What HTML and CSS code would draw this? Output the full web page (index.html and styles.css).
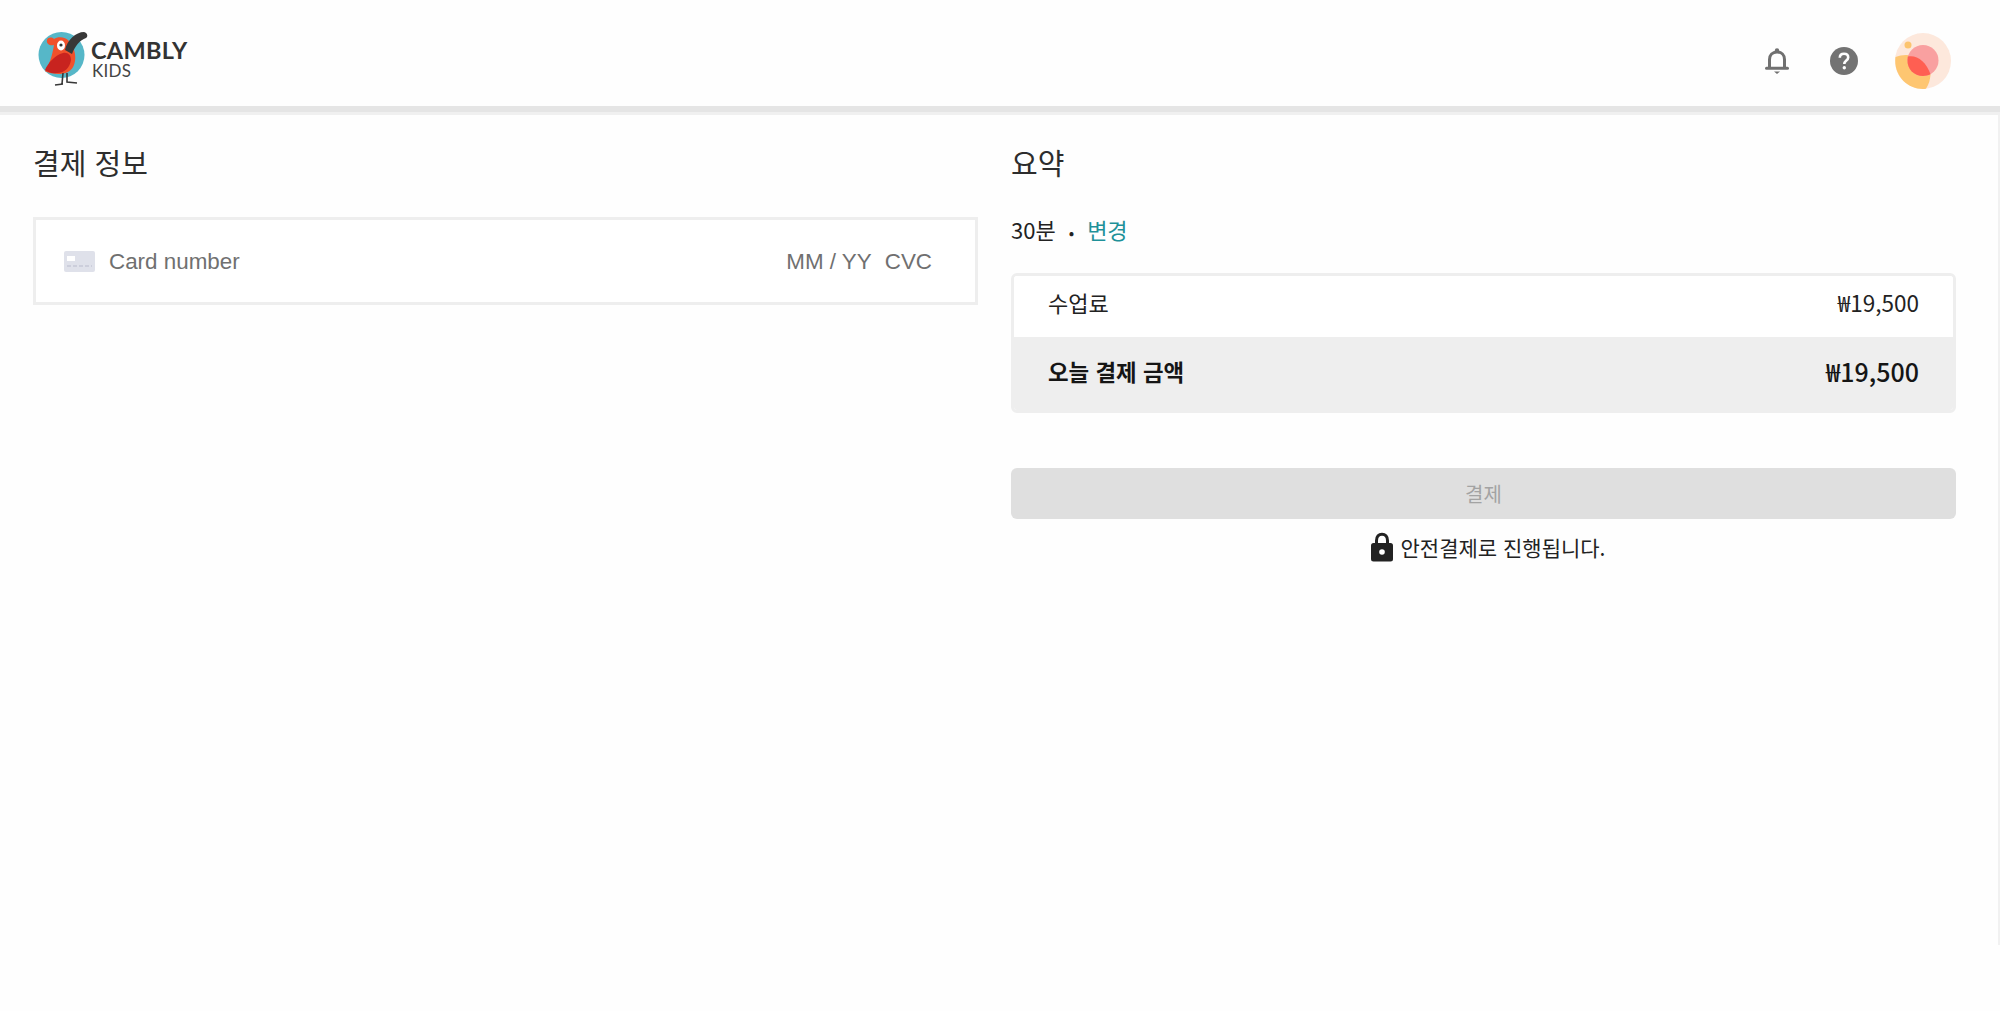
FILE: index.html
```html
<!DOCTYPE html>
<html lang="ko">
<head>
    <meta charset="UTF-8">
    <meta name="viewport" content="width=device-width, initial-scale=1.0">
    <title>Cambly Kids</title>
    <link rel="stylesheet" href="styles.css">
</head>
<body>
    <header class="topbar">
        <div class="logo">
            <svg class="logo-bird" viewBox="36 30 54 60" width="54" height="60">
                <circle cx="61.5" cy="56" r="23" fill="#56b7c8"/>
                <path d="M54 46 C50 47 46 45 47 41 C48 38 52 38 54 40 C58 37 66 38 69 42 C74 47 76 56 75 62 C74 70 68 75 60 75 C54 75 48 74 45 72 C49 66 52 58 54 46 Z" fill="#f1512b"/>
                <path d="M65 51 C67 41 76 33 84 33 C88 34 88 38 86 39 C80 41 75 47 72 55 Z" fill="#383838"/>
                <path d="M45 71 C48 64 55 56 63 54 C68 53 71 56 71 61 C70 68 65 74 57 74 C52 75 48 73 45 71 Z" fill="#c8231f"/>
                <ellipse cx="61" cy="46.500" rx="4" ry="5" fill="#fff"/>
                <circle cx="61" cy="46" r="1.600" fill="#333"/>
                <path d="M63 74 L62 85 M55 86 L63 85 M67 74 L67 83 L77 84" fill="none" stroke="#383838" stroke-width="1.600"/>
            </svg>
            <div class="logo-text">
                <span class="logo-name">CAMBLY</span>
                <span class="logo-kids">KIDS</span>
            </div>
        </div>
        <div class="top-icons">
            <svg class="icon-bell" viewBox="0 0 24 30" width="24" height="30">
                <path d="M4.500 21 V13.500 C4.500 9 7.500 6 12 6 C16.500 6 19.500 9 19.500 13.500 V21" fill="none" stroke="#707070" stroke-width="3"/>
                <path d="M1.500 22.300 H22.500" stroke="#707070" stroke-width="3" stroke-linecap="round"/>
                <circle cx="12" cy="4.500" r="2.200" fill="#707070"/>
                <path d="M9 25.500 H15 L12 28 Z" fill="#707070"/>
            </svg>
            <svg class="icon-help" viewBox="0 0 28 28" width="28" height="28">
                <circle cx="14" cy="14" r="14" fill="#737373"/>
                <path d="M9.800 10.800 C9.800 8.300 11.600 6.800 14 6.800 C16.500 6.800 18.200 8.300 18.200 10.500 C18.200 13.400 14.300 13.800 14.300 17" fill="none" stroke="#fff" stroke-width="2.600"/>
                <circle cx="14.300" cy="20.800" r="1.700" fill="#fff"/>
            </svg>
            <svg class="avatar" viewBox="0 0 56 56" width="56" height="56">
                <circle cx="28" cy="28" r="28" fill="#fde8dc"/>
                <circle cx="13" cy="12" r="3.500" fill="#fcc46f"/>
                <path d="M0.500 24 C12 19 30 22 35.500 42 C35 47 34 51 31 55.700 C14 58 -2 43 0.500 24 Z" fill="#fec671"/>
                <circle cx="28" cy="27.500" r="15.500" fill="#f9a0a0"/>
                <path d="M12.800 23.500 C22 21.500 31.500 29 35.500 41.300 C33 42.500 30.500 43 28 43 C19 43 12 36 12.500 27 Z" fill="#ff5f52"/>
            </svg>
        </div>
    </header>
    <div class="divider"></div>

    <main class="content">
        <section class="col">
            <h2 class="col-title">결제 정보</h2>
            <div class="card-input">
                <svg class="card-icon" viewBox="0 0 31 21" width="31" height="21">
                    <rect width="31" height="21" rx="2" fill="#dfe1ea"/>
                    <rect x="3" y="5" width="8" height="5" fill="#fff"/>
                    <path d="M3 15 H28" stroke="#b9bccb" stroke-width="1.200" stroke-dasharray="4 2"/>
                </svg>
                <span class="card-placeholder">Card number</span>
                <span class="card-expiry">MM / YY</span>
                <span class="card-cvc">CVC</span>
            </div>
        </section>

        <section class="col col-summary">
            <h2 class="col-title">요약</h2>
            <div class="plan">30분<span class="plan-dot">•</span><a class="plan-change" href="#">변경</a></div>
            <div class="summary">
                <div class="summary-row">
                    <span>수업료</span>
                    <span>₩19,500</span>
                </div>
                <div class="summary-total">
                    <span>오늘 결제 금액</span>
                    <span>₩19,500</span>
                </div>
            </div>
            <button class="pay-btn" disabled>결제</button>
            <div class="secure">
                <svg class="lock" viewBox="0 0 24 30" width="24" height="30">
                    <path d="M6.500 13 V8.500 C6.500 4.500 8.800 2.200 12 2.200 C15.200 2.200 17.500 4.500 17.500 8.500 V13" fill="none" stroke="#222" stroke-width="3"/>
                    <rect x="1" y="11" width="22" height="18.500" rx="2.500" fill="#222"/>
                    <circle cx="12" cy="20" r="2.800" fill="#fff"/>
                </svg>
                <span>안전결제로 진행됩니다.</span>
            </div>
        </section>
    </main>
</body>
</html>
```

FILE: styles.css
```css
body {
    margin: 0;
    font-family: "Liberation Sans", "Noto Sans CJK KR", sans-serif;
    color: #222;
    background-color: #fefefe;
    height: 1011px;
    overflow: hidden;
}
.topbar {
    height: 106px;
    box-sizing: border-box;
    display: flex;
    align-items: center;
    justify-content: space-between;
    padding: 0 49px 0 36px;
}
.logo {
    display: flex;
    align-items: center;
    margin-top: 12px;
}
.logo-bird {
    display: block;
    margin-right: 1px;
}
.logo-text {
    display: flex;
    flex-direction: column;
    font-family: Lato, sans-serif;
    color: #333;
    margin-bottom: 1px;
}
.logo-name {
    font-size: 23.500px;
    line-height: 24px;
    font-weight: 700;
    letter-spacing: 0.3px;
}
.logo-kids {
    font-size: 17px;
    line-height: 17px;
    letter-spacing: 0.3px;
    margin-left: 1px;
    color: #444;
}
.top-icons {
    display: flex;
    align-items: center;
    margin-top: 16px;
}
.icon-bell {
    margin-right: 41px;
}
.icon-help {
    margin-right: 37px;
}
.divider {
    height: 6px;
    background-color: #e5e5e5;
    border-bottom: 3px solid #f0f0f0;
}
.content {
    height: 830px;
    box-sizing: border-box;
    display: flex;
    gap: 33px;
    padding: 0 0 0 33px;
    border-right: 2px solid #f1f1f1;
}
.col {
    width: 945px;
}
.col-summary {
    font-family: "Noto Sans CJK KR", sans-serif;
}
.col-title {
    margin: 29px 0 0;
    font-family: "Noto Sans CJK KR", sans-serif;
    font-size: 29px;
    line-height: 36px;
    font-weight: 400;
    color: #2d2d2d;
}
.card-input {
    margin-top: 37px;
    height: 88px;
    box-sizing: border-box;
    border: 3px solid #eeeeee;
    background-color: #fff;
    display: flex;
    align-items: center;
    padding: 2px 43px 0 28px;
    font-size: 22.400px;
    color: #707070;
}
.card-icon {
    margin-right: 14px;
    margin-top: -2px;
}
.card-placeholder {
    flex: 1;
}
.card-cvc {
    margin-left: 13px;
}
.plan {
    margin-top: 32px;
    font-size: 22px;
    line-height: 34px;
    color: #222;
}
.plan-dot {
    margin: 0 13px;
    font-size: 16px;
}
.plan-change {
    color: #1f9199;
    text-decoration: none;
}
.summary {
    margin-top: 24px;
    height: 140px;
    box-sizing: border-box;
    border: 3px solid #eeeeee;
    border-radius: 6px;
    overflow: hidden;
}
.summary-row {
    height: 61px;
    box-sizing: border-box;
    background-color: #fff;
    display: flex;
    align-items: center;
    justify-content: space-between;
    padding: 0 34px 9px;
    font-size: 22px;
    font-weight: 400;
}
.summary-row span:last-child {
    font-size: 22.500px;
}
.summary-total {
    height: 73px;
    box-sizing: border-box;
    background-color: #eeeeee;
    display: flex;
    align-items: center;
    justify-content: space-between;
    padding: 0 34px 6px;
    font-size: 25px;
    font-weight: 500;
    color: #151515;
}
.summary-total span:first-child {
    font-size: 22.400px;
    font-weight: 700;
}
.pay-btn {
    display: block;
    width: 100%;
    margin-top: 55px;
    height: 51px;
    border: none;
    border-radius: 6px;
    background-color: #dfdfdf;
    color: #a3a3a3;
    font-family: inherit;
    font-size: 20px;
}
.secure {
    margin-top: 13px;
    padding-left: 8px;
    display: flex;
    align-items: center;
    justify-content: center;
    gap: 7px;
    font-size: 21px;
    color: #222;
}
```
